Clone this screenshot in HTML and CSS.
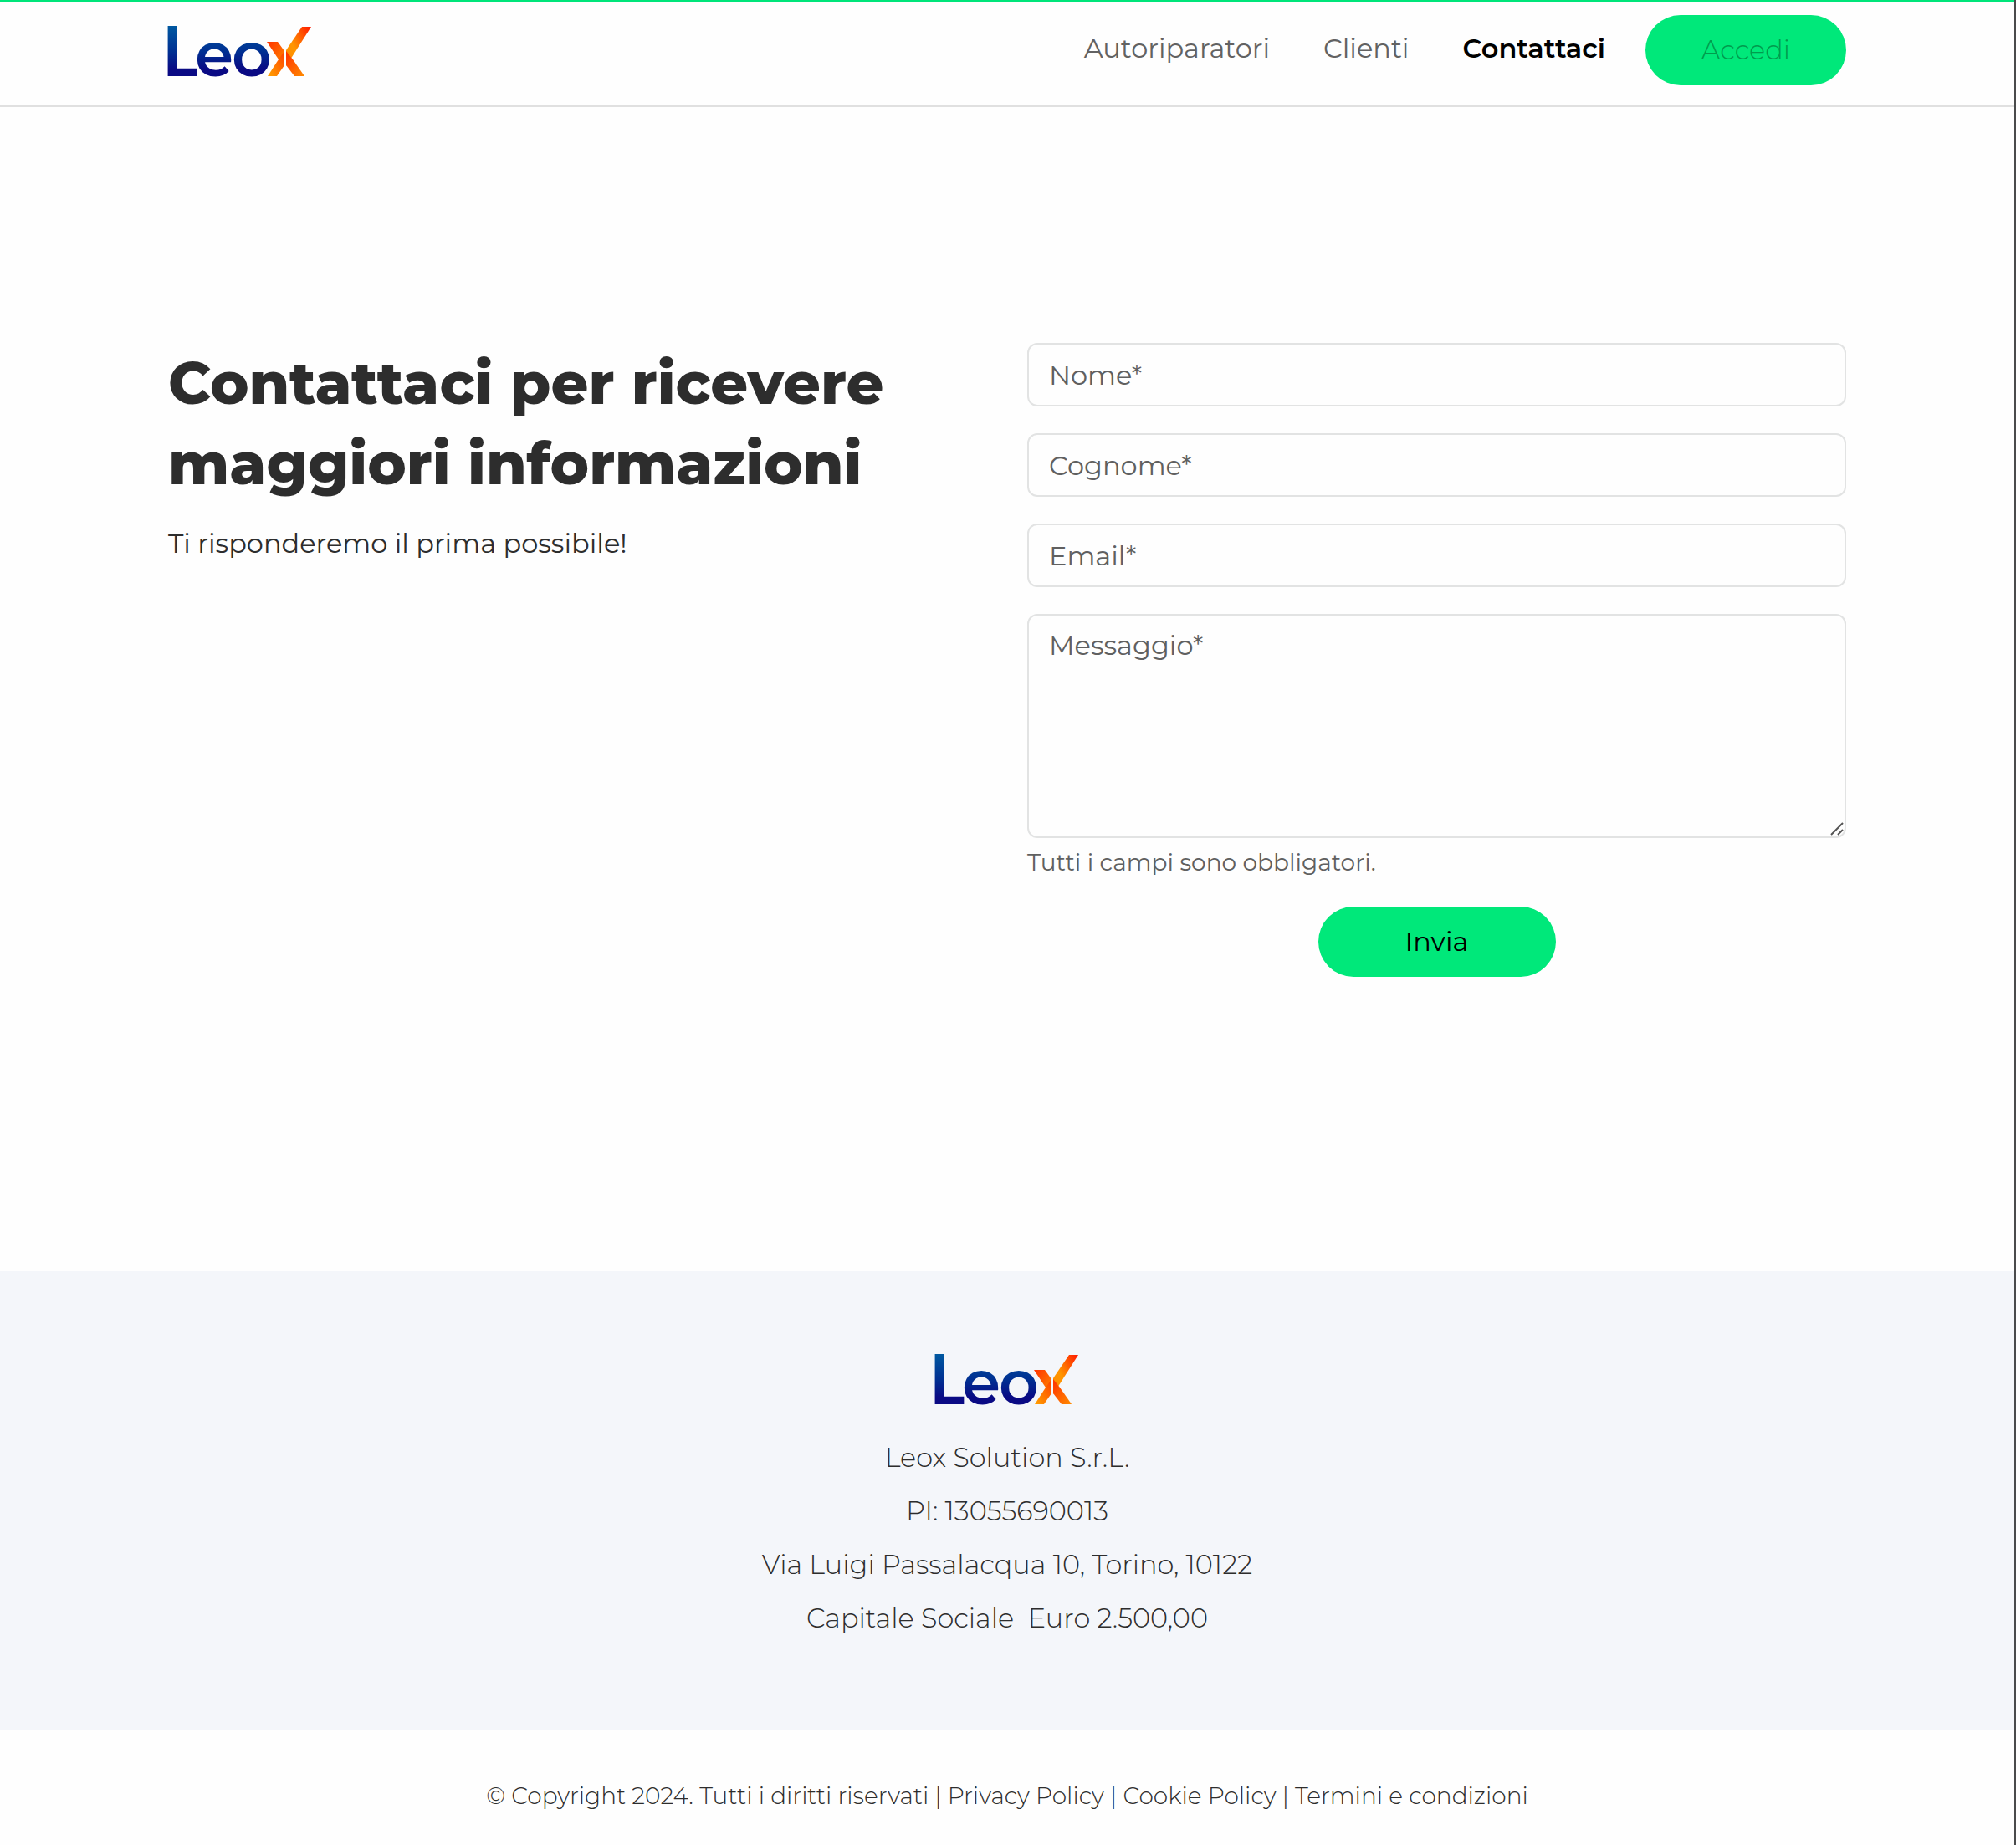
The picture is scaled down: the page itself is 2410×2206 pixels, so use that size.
FILE: index.html
```html
<!DOCTYPE html>
<html lang="it">
<head>
  <meta charset="utf-8">
  <meta name="viewport" content="width=device-width, initial-scale=1">
  <title>Leox - Contattaci</title>
  <link rel="stylesheet" href="styles.css">
</head>
<body>
  <header class="header">
    <a class="logo-link" href="#" aria-label="Leox">
      <svg class="logo" viewBox="0 0 172 62" role="img" aria-hidden="true">
        <defs>
          <linearGradient id="blue" gradientUnits="userSpaceOnUse" x1="0" y1="0" x2="0" y2="60"><stop offset="0" stop-color="#0057a0"/><stop offset="0.5" stop-color="#002f92"/><stop offset="0.85" stop-color="#0a0a84"/></linearGradient>
          <linearGradient id="armLeft" x1="0" y1="0" x2="1" y2="1"><stop offset="0" stop-color="#ff3200"/><stop offset="1" stop-color="#ff8a00"/></linearGradient>
          <linearGradient id="legLeft" x1="1" y1="0" x2="0" y2="1"><stop offset="0" stop-color="#ff4000"/><stop offset="1" stop-color="#ffa200"/></linearGradient>
          <linearGradient id="armRight" x1="1" y1="0" x2="0" y2="1"><stop offset="0" stop-color="#ff1800"/><stop offset="0.6" stop-color="#ff9600"/><stop offset="1" stop-color="#ff8a00"/></linearGradient>
          <linearGradient id="legRight" x1="0" y1="0" x2="1" y2="1"><stop offset="0" stop-color="#ff3000"/><stop offset="1" stop-color="#ff8c00"/></linearGradient>
        </defs>
        <text class="logo-text" y="59" fill="url(#blue)"><tspan class="logo-cap" x="-7">L</tspan><tspan x="32">e</tspan><tspan x="76">o</tspan></text>
        <polygon fill="url(#armLeft)" points="118,18 131,18 139,29 139,46 132,39"/>
        <polygon fill="url(#legLeft)" points="132,39 139,29 139,46 130,59 119,59"/>
        <polygon fill="url(#armRight)" points="160,0 171,0 141,47 141,28"/>
        <polygon fill="url(#legRight)" points="141,29 149,39 163,59 151,59 141,46"/>
      </svg>
    </a>
    <nav class="nav">
      <a class="nav-link" href="#">Autoriparatori</a>
      <a class="nav-link" href="#">Clienti</a>
      <a class="nav-link nav-link-active" href="#" aria-current="page">Contattaci</a>
      <button class="button button-login" type="button">Accedi</button>
    </nav>
  </header>

  <main class="contact">
    <section class="intro">
      <h1 class="title">Contattaci per ricevere maggiori informazioni</h1>
      <p class="subtitle">Ti risponderemo il prima possibile!</p>
    </section>
    <form class="form">
      <input class="field" type="text" name="nome" aria-label="Nome" placeholder="Nome*">
      <input class="field" type="text" name="cognome" aria-label="Cognome" placeholder="Cognome*">
      <input class="field" type="email" name="email" aria-label="Email" placeholder="Email*">
      <div class="message">
        <textarea class="field field-message" name="messaggio" aria-label="Messaggio" placeholder="Messaggio*"></textarea>
        <svg class="grip" viewBox="0 0 16 16" aria-hidden="true"><path d="M1 15L15 1M9 15L15 9"/></svg>
      </div>
      <p class="hint">Tutti i campi sono obbligatori.</p>
      <button class="button button-send" type="submit">Invia</button>
    </form>
  </main>

  <footer>
    <div class="company">
      <svg class="logo" viewBox="0 0 172 62" role="img" aria-label="Leox">
        <text class="logo-text" y="59" fill="url(#blue)"><tspan class="logo-cap" x="-7">L</tspan><tspan x="32">e</tspan><tspan x="76">o</tspan></text>
        <polygon fill="url(#armLeft)" points="118,18 131,18 139,29 139,46 132,39"/>
        <polygon fill="url(#legLeft)" points="132,39 139,29 139,46 130,59 119,59"/>
        <polygon fill="url(#armRight)" points="160,0 171,0 141,47 141,28"/>
        <polygon fill="url(#legRight)" points="141,29 149,39 163,59 151,59 141,46"/>
      </svg>
      <address class="address">
        <p>Leox Solution S.r.L.</p>
        <p>PI: 13055690013</p>
        <p>Via Luigi Passalacqua 10, Torino, 10122</p>
        <p>Capitale Sociale&nbsp; Euro 2.500,00</p>
      </address>
    </div>
    <p class="legal">© Copyright 2024. Tutti i diritti riservati | <a href="#">Privacy Policy</a> | <a href="#">Cookie Policy</a> | <a href="#">Termini e condizioni</a></p>
  </footer>
</body>
</html>
```
FILE: styles.css
```css
*,
*::before,
*::after {
  box-sizing: border-box;
}

body {
  margin: 0;
  min-height: 100vh;
  border-right: 2px solid #4a4b4c;
  background: #fefefe;
  color: #2d2d2d;
  font-family: Montserrat, Inter, "Open Sans", sans-serif;
  font-size: 32px;
  line-height: 48px;
}

h1,
p {
  margin: 0;
}

a {
  color: inherit;
  text-decoration: none;
}

.header {
  display: flex;
  justify-content: space-between;
  align-items: flex-start;
  height: 128px;
  padding: 16px 201px 0;
  border-top: 2px solid #00e57a;
  border-bottom: 2px solid #e0e0e0;
}

.logo-link {
  padding-top: 14px;
}

.logo {
  display: block;
  width: 172px;
  height: 62px;
  overflow: visible;
}

.logo-text {
  font-size: 74px;
  font-weight: 600;
}

.logo-cap {
  font-family: Lato, sans-serif;
  font-size: 82px;
  font-weight: 700;
}

.nav {
  display: flex;
  align-items: flex-start;
}

.nav-link {
  padding: 16px 32px;
  color: #626262;
}

.nav-link-active {
  padding-right: 48px;
  color: #000;
  font-weight: 600;
}

.button {
  height: 84px;
  padding: 0;
  border: 0;
  border-radius: 42px;
  background: #00e87a;
  color: #000;
  font: inherit;
  cursor: pointer;
}

.button-login {
  width: 240px;
  color: #009c4e;
  font-weight: 300;
}

.button-send {
  width: 284px;
  margin: 0 auto;
}

.contact {
  display: grid;
  grid-template-columns: 1fr 1fr;
  gap: 48px;
  padding: 282px 201px 352px;
}

.title {
  font-size: 70px;
  font-weight: 800;
  line-height: 96px;
}

.subtitle {
  margin-top: 24px;
}

.form {
  display: flex;
  flex-direction: column;
}

.field {
  display: block;
  width: 100%;
  height: 76px;
  margin: 0 0 32px;
  padding: 12px 24px;
  border: 2px solid #e2e3e3;
  border-radius: 12px;
  background: transparent;
  color: #2d2d2d;
  font: inherit;
}

.field::placeholder {
  color: #606060;
  opacity: 1;
}

.message {
  position: relative;
}

.field-message {
  height: 268px;
  margin: 0;
  resize: none;
}

.grip {
  position: absolute;
  right: 3px;
  bottom: 3px;
  width: 16px;
  height: 16px;
  fill: none;
  stroke: #555;
  stroke-width: 2;
}

.hint {
  margin: 8px 0 32px;
  color: #606060;
  font-size: 28px;
  line-height: 42px;
}

.company {
  display: flex;
  flex-direction: column;
  align-items: center;
  gap: 29px;
  height: 548px;
  padding-top: 100px;
  background: #f4f6fa;
}

.address {
  font-style: normal;
  font-weight: 300;
  line-height: 64px;
  text-align: center;
}

.legal {
  padding: 58px 0 38px;
  font-size: 28px;
  font-weight: 300;
  line-height: 42px;
  text-align: center;
}
```
